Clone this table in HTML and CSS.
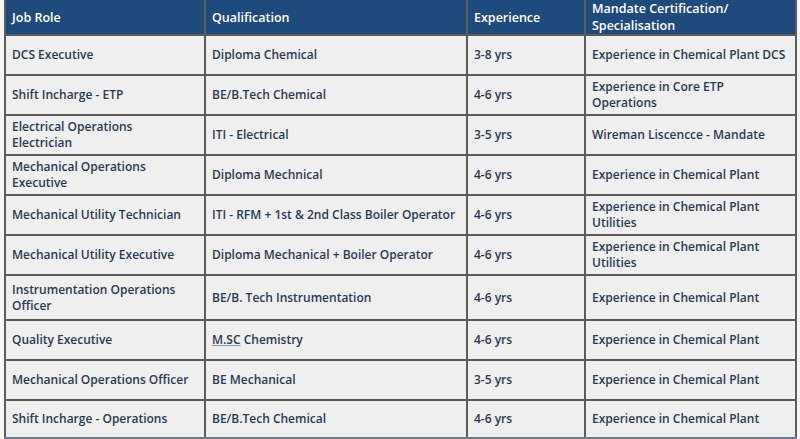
FILE: index.html
```html
<!DOCTYPE html>
<html>
<head>
<meta charset="utf-8">
<link rel="stylesheet" href="styles.css">
</head>
<body>
<table class="jobs">
  <colgroup>
    <col class="c1"><col class="c2"><col class="c3"><col class="c4">
  </colgroup>
  <thead>
    <tr class="head">
      <th>Job Role</th>
      <th>Qualification</th>
      <th>Experience</th>
      <th>Mandate Certification/<br>Specialisation</th>
    </tr>
  </thead>
  <tbody>
    <tr class="r"><td>DCS Executive</td><td>Diploma Chemical</td><td>3-8 yrs</td><td>Experience in Chemical Plant DCS</td></tr>
    <tr class="r"><td>Shift Incharge - ETP</td><td>BE/B.Tech Chemical</td><td>4-6 yrs</td><td>Experience in Core ETP<br>Operations</td></tr>
    <tr class="r"><td>Electrical Operations<br>Electrician</td><td>ITI - Electrical</td><td>3-5 yrs</td><td>Wireman Liscencce - Mandate</td></tr>
    <tr class="r"><td>Mechanical Operations<br>Executive</td><td>Diploma Mechnical</td><td>4-6 yrs</td><td>Experience in Chemical Plant</td></tr>
    <tr class="r"><td>Mechanical Utility Technician</td><td>ITI - RFM + 1st &amp; 2nd Class Boiler Operator</td><td>4-6 yrs</td><td>Experience in Chemical Plant<br>Utilities</td></tr>
    <tr class="r"><td>Mechanical Utility Executive</td><td>Diploma Mechanical + Boiler Operator</td><td>4-6 yrs</td><td>Experience in Chemical Plant<br>Utilities</td></tr>
    <tr class="r tall"><td>Instrumentation Operations<br>Officer</td><td>BE/B. Tech Instrumentation</td><td>4-6 yrs</td><td>Experience in Chemical Plant</td></tr>
    <tr class="r"><td>Quality Executive</td><td><span class="spell">M.SC</span> Chemistry</td><td>4-6 yrs</td><td>Experience in Chemical Plant</td></tr>
    <tr class="r"><td>Mechanical Operations Officer</td><td>BE Mechanical</td><td>3-5 yrs</td><td>Experience in Chemical Plant</td></tr>
    <tr class="r last"><td>Shift Incharge - Operations</td><td>BE/B.Tech Chemical</td><td>4-6 yrs</td><td>Experience in Chemical Plant</td></tr>
  </tbody>
</table>
</body>
</html>
```
FILE: styles.css
```css
html, body {
  margin: 0;
  padding: 0;
  background: #f6f6f6;
}
body {
  padding: 0 4px 0 4px;
  font-family: "Open Sans", "Liberation Sans", sans-serif;
}
.jobs {
  border-collapse: collapse;
  table-layout: fixed;
  width: 791px;
  background: #efefef;
  color: #293a53;
  font-size: 12px;
  font-weight: 600;
  line-height: 16px;
}
.c1 { width: 200px; }
.c2 { width: 262px; }
.c3 { width: 118px; }
.c4 { width: 211px; }
.jobs th, .jobs td {
  border: 2px solid #5c5c5c;
  padding: 0 6px;
  text-align: left;
  vertical-align: middle;
}
.head {
  height: 35px;
  background: #1f4a7c;
  color: #ffffff;
}
.head th {
  font-size: 12.5px;
  font-weight: 600;
  line-height: 17px;
  border-top: none;
  padding: 0 6px;
}
.r { height: 40px; }
.r.tall { height: 45px; }
.r.last { height: 38px; }
.jobs tbody tr.last td { border-bottom-color: #6a7a90; }
.spell {
  text-decoration: underline;
  text-decoration-color: #8a96a6;
}
```
